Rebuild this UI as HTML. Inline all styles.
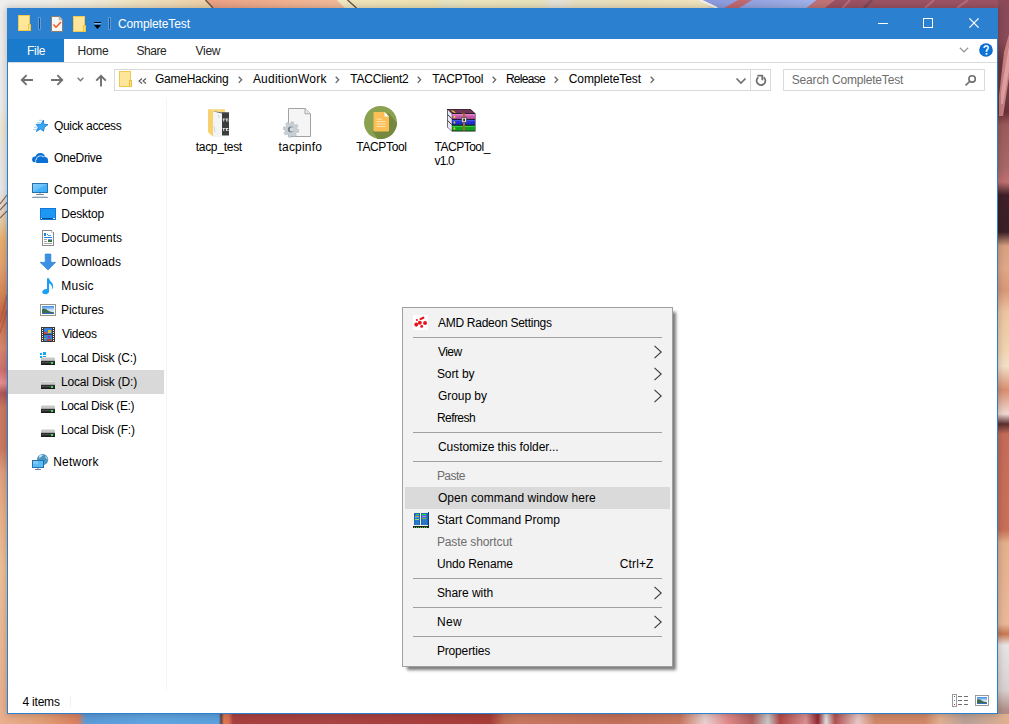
<!DOCTYPE html>
<html><head><meta charset="utf-8">
<style>
*{margin:0;padding:0;box-sizing:border-box}
html,body{width:1009px;height:724px;overflow:hidden}
body{position:relative;font-family:"Liberation Sans",sans-serif;font-size:12px;color:#000;background:#fff}
.a{position:absolute}
.t{position:absolute;white-space:pre;line-height:14px;height:14px;font-family:"Liberation Sans",sans-serif;font-size:12px}
svg{position:absolute;overflow:visible}
</style></head><body>

<!-- 00_bg.html -->
<svg style="left:0;top:0" width="1009" height="8" viewBox="0 0 1009 8">
<defs>
<linearGradient id="tg" x1="0" x2="1009" gradientUnits="userSpaceOnUse">
<stop offset="0" stop-color="#efefef"/><stop offset="0.045" stop-color="#f0eee8"/><stop offset="0.09" stop-color="#f0eada"/><stop offset="0.125" stop-color="#efe4c6"/><stop offset="0.2" stop-color="#ecd2aa"/>
<stop offset="0.34" stop-color="#f0e4bc"/><stop offset="0.43" stop-color="#eee2b4"/><stop offset="0.44" stop-color="#e6e2c4"/><stop offset="0.47" stop-color="#ece4bc"/><stop offset="0.535" stop-color="#e8e2bc"/><stop offset="0.55" stop-color="#e4e2dc"/><stop offset="0.57" stop-color="#e8e0c4"/><stop offset="0.64" stop-color="#ece0b8"/><stop offset="0.7" stop-color="#f0e4c0"/>
<stop offset="0.72" stop-color="#8a9ae0"/><stop offset="0.8" stop-color="#a0b0e8"/><stop offset="0.81" stop-color="#c07070"/><stop offset="0.84" stop-color="#a45a64"/><stop offset="1" stop-color="#9a5060"/>
</linearGradient>
<linearGradient id="pg" x1="206" x2="350" gradientUnits="userSpaceOnUse"><stop offset="0" stop-color="#eca084"/><stop offset="0.5" stop-color="#f0b090"/><stop offset="1" stop-color="#f2bc9c"/></linearGradient>
<linearGradient id="bg2" x1="700" x2="820" gradientUnits="userSpaceOnUse"><stop offset="0" stop-color="#8898dc"/><stop offset="1" stop-color="#a4b4ea"/></linearGradient>
</defs>
<rect x="0" y="0" width="1009" height="8" fill="url(#tg)"/>
<polygon points="206,0 337,0 345,8 213,8" fill="url(#pg)"/>
<polygon points="337,0 349,0 357,8 345,8" fill="#f2e8c4"/>
<path d="M205.5 0L213 8M347.5 0L356.5 8" stroke="#6e5040" stroke-width="1.4"/>
<polygon points="701,0 817,0 807,8 719,8" fill="url(#bg2)"/>
<path d="M700 0L717 8" stroke="#f6f2ec" stroke-width="2.2"/>
<polygon points="738,0 752,0 739,8 724,8" fill="#c06a72"/>
<polygon points="817,0 1009,0 1009,8 807,8" fill="#9c5262"/>
<polygon points="817,0 835,0 825,8 807,8" fill="#c07478"/>
<path d="M850 0L842.5 8M934 0L925 8M968 0L957 8" stroke="#b86c78" stroke-width="2.2"/>
<path d="M872 0L864 8" stroke="#7a4858" stroke-width="2.5"/>
</svg>
<div class="a" style="left:0;top:8px;width:7px;height:716px;background:linear-gradient(180deg,#eeeeee 0px,#ececea 100px,#ece6d4 120px,#e8e6e0 140px,#e8e8e8 180px,#e0d8cc 200px,#e6c8a0 215px,#e8b070 232px,#e4a070 260px,#d88858 285px,#c86848 305px,#d07858 320px,#d88870 340px,#d07070 362px,#e89090 375px,#b05858 385px,#cc7a60 400px,#cc7a60 440px,#e0a080 465px,#e8b088 500px,#ecc098 560px,#e8b090 716px)"></div>
<div class="a" style="left:998px;top:0;width:11px;height:724px;background:linear-gradient(180deg,#8a4a58 0px,#8a4a58 40px,#6a3840 62px,#6a3840 100px,#6a3038 112px,#9a5a5a 125px,#a86868 168px,#c07070 182px,#402028 195px,#3a2026 232px,#d8a080 246px,#e0a888 268px,#d89878 290px,#ecc4a0 312px,#f0d4b0 350px,#f2e0c8 366px,#d88e70 390px,#f0d8d0 414px,#5a3030 424px,#c46c58 434px,#c87058 530px,#e4b08c 543px,#e8b898 624px,#c87850 634px,#e8e4e4 645px,#d8d0d0 690px,#b09088 710px,#a88880 724px)"></div>
<div class="a" style="left:0;top:714px;width:1009px;height:10px;background:linear-gradient(90deg,#e8b090 0px,#e2a078 40px,#d88060 78px,#5a9ad8 86px,#60a4e0 150px,#5aa0dc 219px,#604040 221px,#e07850 224px,#d87050 229px,#a84040 233px,#a84444 330px,#a83c38 490px,#c07058 505px,#c87860 520px,#c07058 620px,#c87860 680px,#e8d0d0 705px,#e08888 728px,#b06060 752px,#c8c8c8 768px,#b04848 780px,#d89090 806px,#902830 818px,#e0e0e0 826px,#b05050 835px,#e8c8c8 858px,#d08868 875px,#d08868 925px,#e0b090 940px,#b8a098 965px,#e0b090 1009px)"></div>

<svg style="left:998px;top:0" width="11" height="130" viewBox="0 0 11 130"><polygon points="11,34 11,78 5,116 1,116 1,96 6,52" fill="#c88080"/><polygon points="11,46 11,70 5,104 3,104 3,92" fill="#e0a0a0"/></svg>
<svg style="left:0;top:190px" width="7" height="150" viewBox="0 0 7 150"><path d="M0 14L7 5M0 20L7 12.5M0 28L7 21" stroke="#8a6050" stroke-width="1.1" fill="none"/><path d="M0 133L7 105M0 143L7 120" stroke="#b05840" stroke-width="1.6" fill="none" opacity="0.7"/></svg>

<!-- 10_window.html -->
<div class="a" style="left:7px;top:8px;width:991px;height:706px;background:#fff;border:1px solid #2b7fd0;border-top:0;box-shadow:0 0 7px 1px rgba(0,0,0,0.2)"></div>
<div class="a" style="left:7px;top:8px;width:991px;height:31px;background:#2b80d0"></div>
<div class="a" style="left:7px;top:39px;width:57px;height:23px;background:#1a7acb"></div>
<div class="a" style="left:8px;top:62px;width:989px;height:1px;background:#dadbdc"></div>
<div class="a" style="left:114px;top:69px;width:657px;height:22px;border:1px solid #d9d9d9"></div>
<div class="a" style="left:750px;top:70px;width:1px;height:20px;background:#d9d9d9"></div>
<div class="a" style="left:783px;top:69px;width:202px;height:22px;border:1px solid #d9d9d9"></div>
<div class="a" style="left:166px;top:98px;width:1px;height:592px;background:#f5f5f5"></div>
<div class="a" style="left:8px;top:370px;width:156px;height:24px;background:#d9d9d9"></div>
<div class="a" style="left:70px;top:696px;width:1px;height:11px;background:#f0f0f0"></div>

<!-- 20_title.html -->
<svg style="left:18px;top:15px" width="13" height="16" viewBox="0 0 13 16" shape-rendering="crispEdges">
<rect x="0" y="0" width="12" height="16" fill="#f7c948"/><rect x="1" y="1" width="10" height="14" fill="#ffe699"/>
<rect x="10" y="9" width="3" height="7" fill="#f3c33c"/><rect x="11" y="10" width="1" height="5" fill="#ffe28a"/>
</svg>
<div class="a" style="left:38px;top:17px;width:3px;height:13px;background:#5d9ddd;border-radius:1px"></div>
<div class="a" style="left:39px;top:18px;width:1px;height:11px;background:#1e4e7e"></div>
<svg style="left:51px;top:16px" width="12" height="16" viewBox="0 0 12 16">
<path d="M0.5 0.5H8.3L11.5 3.7V15.5H0.5Z" fill="#f6f6f6" stroke="#8e7e70" stroke-width="1"/>
<path d="M8.3 0.5V3.7H11.5" fill="#dcdcdc" stroke="#a09080" stroke-width="0.8"/>
</svg>
<svg style="left:51px;top:16px" width="12" height="16" viewBox="0 0 12 16">
<polyline points="2.5,8.5 5,11.2 10,6" fill="none" stroke="#f05a1e" stroke-width="1.6"/>
</svg>
<svg style="left:73px;top:16px" width="13" height="16" viewBox="0 0 13 16" shape-rendering="crispEdges">
<rect x="0" y="0" width="12" height="16" fill="#f7c948"/><rect x="1" y="1" width="10" height="14" fill="#ffe699"/>
<rect x="10" y="9" width="3" height="7" fill="#f3c33c"/><rect x="11" y="10" width="1" height="5" fill="#ffe28a"/>
</svg>
<svg style="left:94px;top:22px" width="8" height="8" viewBox="0 0 8 8" shape-rendering="crispEdges">
<rect x="0" y="0" width="7" height="1" fill="#000"/><rect x="0" y="1" width="7" height="1" fill="#7ab8f0"/>
<path d="M0 3H7L3.5 7Z" fill="#000" shape-rendering="auto"/>
</svg>
<div class="a" style="left:108px;top:17px;width:3px;height:13px;background:#5d9ddd;border-radius:1px"></div>
<div class="a" style="left:109px;top:18px;width:1px;height:11px;background:#1e4e7e"></div>
<!-- window controls -->
<div class="a" style="left:878px;top:23px;width:10px;height:1px;background:#fff"></div>
<div class="a" style="left:923px;top:18px;width:10px;height:10px;border:1px solid #fff"></div>
<svg style="left:969px;top:18px" width="10" height="10" viewBox="0 0 10 10"><path d="M0.4 0.4L9.6 9.6M9.6 0.4L0.4 9.6" stroke="#fff" stroke-width="1.3"/></svg>
<!-- ribbon chevron & help -->
<svg style="left:959px;top:47px" width="10" height="7" viewBox="0 0 10 7"><polyline points="0.8,0.8 5,4.8 9.2,0.8" fill="none" stroke="#999" stroke-width="1.2"/></svg>
<svg style="left:979px;top:43px" width="14" height="14" viewBox="0 0 14 14"><circle cx="7" cy="7" r="6.8" fill="#0a62c0"/><circle cx="7" cy="7" r="5.9" fill="#0c74d8"/>
<path d="M5.2 4.9C5.2 3.5 6.1 2.8 7.2 2.8C8.4 2.8 9.2 3.6 9.2 4.7C9.2 6.2 7.5 6.5 7.5 8.3V8.9" fill="none" stroke="#e8f2fc" stroke-width="1.7"/>
<rect x="6.6" y="10" width="1.8" height="1.7" fill="#fff"/></svg>

<!-- 30_address.html -->
<svg style="left:20px;top:74px" width="14" height="12" viewBox="0 0 14 12"><path d="M13 6H1.8M6.6 1.2L1.8 6L6.6 10.8" fill="none" stroke="#707070" stroke-width="1.9"/></svg>
<svg style="left:50px;top:74px" width="14" height="12" viewBox="0 0 14 12"><path d="M1 6H12.2M7.4 1.2L12.2 6L7.4 10.8" fill="none" stroke="#707070" stroke-width="1.9"/></svg>
<svg style="left:77px;top:77px" width="7" height="5" viewBox="0 0 7 5"><polyline points="0.6,0.8 3.5,3.8 6.4,0.8" fill="none" stroke="#777" stroke-width="1.3"/></svg>
<svg style="left:95px;top:74px" width="12" height="13" viewBox="0 0 12 13"><path d="M6 12.5V1.8M1.2 6.6L6 1.8L10.8 6.6" fill="none" stroke="#707070" stroke-width="1.9"/></svg>
<svg style="left:119px;top:71px" width="13" height="16" viewBox="0 0 13 16" shape-rendering="crispEdges">
<rect x="0" y="0" width="12" height="16" fill="#f0c850"/><rect x="1" y="1" width="10" height="14" fill="#fde699"/>
<rect x="10" y="9" width="3" height="7" fill="#ecc040"/><rect x="11" y="10" width="1" height="5" fill="#fde08a"/>
</svg>
<svg style="left:138px;top:78px" width="9" height="6" viewBox="0 0 9 6"><path d="M4 0.5L1 3L4 5.5M8 0.5L5 3L8 5.5" fill="none" stroke="#555" stroke-width="1.1"/></svg>

<!-- 31_crumbs.html -->
<svg style="left:238px;top:76px" width="5" height="8" viewBox="0 0 5 8"><polyline points="0.7,0.7 3.7,3.8 0.7,6.9" fill="none" stroke="#666" stroke-width="1.3"/></svg>
<svg style="left:335px;top:76px" width="5" height="8" viewBox="0 0 5 8"><polyline points="0.7,0.7 3.7,3.8 0.7,6.9" fill="none" stroke="#666" stroke-width="1.3"/></svg>
<svg style="left:417px;top:76px" width="5" height="8" viewBox="0 0 5 8"><polyline points="0.7,0.7 3.7,3.8 0.7,6.9" fill="none" stroke="#666" stroke-width="1.3"/></svg>
<svg style="left:492px;top:76px" width="5" height="8" viewBox="0 0 5 8"><polyline points="0.7,0.7 3.7,3.8 0.7,6.9" fill="none" stroke="#666" stroke-width="1.3"/></svg>
<svg style="left:554px;top:76px" width="5" height="8" viewBox="0 0 5 8"><polyline points="0.7,0.7 3.7,3.8 0.7,6.9" fill="none" stroke="#666" stroke-width="1.3"/></svg>
<svg style="left:650px;top:76px" width="5" height="8" viewBox="0 0 5 8"><polyline points="0.7,0.7 3.7,3.8 0.7,6.9" fill="none" stroke="#666" stroke-width="1.3"/></svg>
<svg style="left:735px;top:77px" width="12" height="8" viewBox="0 0 12 8"><polyline points="1.5,1.5 6,6 10.5,1.5" fill="none" stroke="#707070" stroke-width="1.7"/></svg>
<svg style="left:754px;top:73px" width="14" height="14" viewBox="0 0 14 14"><path d="M9.6 4.2A4.4 4.4 0 1 1 4.4 4.2" fill="none" stroke="#707070" stroke-width="1.8"/><path d="M3.3 2.6H8.3V7.2" fill="none" stroke="#707070" stroke-width="1.8"/></svg>
<svg style="left:963px;top:73px" width="14" height="14" viewBox="0 0 14 14"><circle cx="9.1" cy="5.9" r="3.2" fill="none" stroke="#6e6e6e" stroke-width="1.6"/><path d="M6.9 8.2L2.6 12.4" stroke="#6e6e6e" stroke-width="1.6"/></svg>

<!-- 40_nav.html -->
<!-- quick access star -->
<svg style="left:30px;top:116px" width="20" height="20" viewBox="0 0 20 20">
<g stroke="#8cc8f4" stroke-width="0.9" stroke-linecap="round" opacity="0.9"><path d="M9.2 4.3H12M7.6 6.5H10.2M4.6 11.3H7M3.6 13.5H6.2"/></g>
<path d="M13.5 4.1L13.7 8.3L18 8.5L14.3 11.4L13.5 15.2L10.5 13L6.4 15.5L8.4 11.2L6.1 8.3L11 8.3Z" fill="#38a8f4" stroke="#1a80d8" stroke-width="0.9" stroke-linejoin="round"/>
</svg>
<!-- onedrive -->
<svg style="left:30px;top:148px" width="20" height="20" viewBox="0 0 20 20">
<defs><clipPath id="odb"><rect x="0" y="0" width="20" height="14.2"/></clipPath><clipPath id="odf"><rect x="0" y="0" width="20" height="15.1"/></clipPath></defs>
<g clip-path="url(#odb)" fill="#0b6fd6"><circle cx="10.3" cy="10.2" r="5.1"/><circle cx="5.2" cy="11.6" r="3.1"/></g>
<g clip-path="url(#odf)" fill="#0b6fd6" stroke="#fff" stroke-width="1.3"><circle cx="10.6" cy="12.4" r="4.2"/><circle cx="14.8" cy="12.2" r="3.1"/><circle cx="16" cy="13.2" r="2.1"/><rect x="6.2" y="12" width="11.8" height="4"/></g>
<g clip-path="url(#odf)" fill="#0b6fd6"><circle cx="10.6" cy="12.4" r="4.2"/><circle cx="14.8" cy="12.2" r="3.1"/><circle cx="16" cy="13.2" r="2.1"/><rect x="6.2" y="12" width="11.8" height="4"/></g>
</svg>
<!-- computer -->
<svg style="left:32px;top:183px" width="16" height="16" viewBox="0 0 16 16" shape-rendering="crispEdges">
<defs><linearGradient id="scr" x1="0" y1="0" x2="1" y2="1"><stop offset="0" stop-color="#86cdf8"/><stop offset="0.5" stop-color="#66c0fa"/><stop offset="0.52" stop-color="#48b4f8"/><stop offset="1" stop-color="#38acf8"/></linearGradient></defs>
<rect x="0" y="0" width="16" height="10" fill="#2a70a8"/><rect x="1" y="1" width="14" height="8" fill="url(#scr)"/>
<rect x="7" y="10" width="2" height="1" fill="#c0ccd8"/><rect x="4" y="11" width="8" height="1" fill="#7888a0"/>
<rect x="0" y="14" width="16" height="1" fill="#8c9cb0"/><rect x="1" y="13" width="14" height="1" fill="#d8e0e8"/>
</svg>
<!-- desktop -->
<svg style="left:40px;top:208px" width="16" height="12" viewBox="0 0 16 12" shape-rendering="crispEdges">
<rect x="0" y="0" width="16" height="12" fill="#1478d8"/><rect x="1" y="1" width="14" height="9" fill="#1e96f4"/>
<rect x="1" y="10" width="14" height="1" fill="#0c4a98"/>
<rect x="1" y="10" width="1" height="1" fill="#fff"/><rect x="13" y="10" width="1" height="1" fill="#e0f0ff"/><rect x="14" y="10" width="1" height="1" fill="#fff"/>
</svg>
<!-- documents -->
<svg style="left:42px;top:230px" width="12" height="16" viewBox="0 0 12 16" shape-rendering="crispEdges">
<path d="M0 0H9L12 3V16H0Z" fill="#8a8a8a"/><path d="M1 1H9V3H11V15H1Z" fill="#fff"/><rect x="9" y="1" width="2" height="2" fill="#d8d8d8"/>
<rect x="2" y="3" width="2" height="3" fill="#1e80d8"/><rect x="5" y="4" width="1" height="1" fill="#1e80d8"/><rect x="6" y="5" width="3" height="1" fill="#4aa0e8"/>
<rect x="2" y="7" width="8" height="1" fill="#1e80d8"/>
<rect x="2" y="9" width="3" height="1" fill="#a0a0a0"/><rect x="6" y="9" width="4" height="1" fill="#6aa0e8"/>
<rect x="2" y="11" width="3" height="1" fill="#a0a0a0"/><rect x="6" y="10" width="4" height="2" fill="#3a7a48"/>
<rect x="2" y="13" width="8" height="1" fill="#a8a8a8"/>
</svg>
<!-- downloads -->
<svg style="left:40px;top:254px" width="16" height="16" viewBox="0 0 16 16">
<path d="M5.2 0H10.9V8.3H15.7L8 16L0 8.3H5.2Z" fill="#3a90e2" stroke="#2a7ad4" stroke-width="0.6"/>
</svg>
<!-- music -->
<svg style="left:41px;top:278px" width="13" height="17" viewBox="0 0 13 17">
<path d="M6 0.2H8C8.3 1.8 9.6 3.4 10.9 4.8C12.3 6.3 12.6 8.7 11.4 11L10.8 10.6C11.4 8.8 10.8 7.3 9.5 6.2C9 5.8 8.5 5.5 8.1 5.2V13.3C8.1 15 6.5 16.2 4.3 16.2C2.3 16.2 1.1 15.4 1.3 14C1.5 12.3 3.4 11 5.6 11C6 11 6 11 6 11.1Z" fill="#18a0f2"/>
</svg>
<!-- pictures -->
<svg style="left:40px;top:304px" width="16" height="12" viewBox="0 0 16 12">
<defs><linearGradient id="pic" x1="0" y1="0" x2="0" y2="1"><stop offset="0" stop-color="#3a88ec"/><stop offset="0.5" stop-color="#d0e4f4"/><stop offset="1" stop-color="#e8f0f8"/></linearGradient></defs>
<g shape-rendering="crispEdges"><rect x="0" y="0" width="16" height="12" fill="#959595"/><rect x="1" y="1" width="14" height="10" fill="#fff"/><rect x="2" y="2" width="12" height="8" fill="url(#pic)"/></g>
<path d="M2 5.2C4 4.4 5.5 4.6 7.5 6.2C9.5 7.6 11.5 8 14 8.2V10H2Z" fill="#3c6c4c"/><rect x="2" y="9" width="12" height="1" fill="#3a6cc0"/>
</svg>
<!-- videos -->
<svg style="left:41px;top:327px" width="14" height="15" viewBox="0 0 14 15" shape-rendering="crispEdges">
<rect x="0" y="0" width="14" height="15" fill="#3a3a3a"/>
<rect x="1" y="1" width="1" height="1" fill="#fff"/><rect x="1" y="3" width="1" height="1" fill="#fff"/><rect x="1" y="5" width="1" height="1" fill="#fff"/><rect x="1" y="7" width="1" height="1" fill="#fff"/><rect x="1" y="9" width="1" height="1" fill="#fff"/><rect x="1" y="11" width="1" height="1" fill="#fff"/><rect x="1" y="13" width="1" height="1" fill="#fff"/>
<rect x="12" y="1" width="1" height="1" fill="#fff"/><rect x="12" y="3" width="1" height="1" fill="#fff"/><rect x="12" y="5" width="1" height="1" fill="#fff"/><rect x="12" y="7" width="1" height="1" fill="#fff"/><rect x="12" y="9" width="1" height="1" fill="#fff"/><rect x="12" y="11" width="1" height="1" fill="#fff"/><rect x="12" y="13" width="1" height="1" fill="#fff"/>
<rect x="3" y="1" width="8" height="6" fill="#3a80d8"/><rect x="3" y="8" width="8" height="6" fill="#3a80d8"/>
<rect x="7" y="3" width="3" height="3" fill="#e0c020"/><rect x="3" y="5" width="3" height="2" fill="#e04040"/><rect x="6" y="12" width="4" height="2" fill="#c04020"/><rect x="7" y="9" width="2" height="2" fill="#a030a0"/><rect x="3" y="11" width="2" height="1" fill="#80c040"/>
</svg>

<!-- 41_drives.html -->
<svg style="left:40px;top:352px" width="7" height="7" viewBox="0 0 7 7" shape-rendering="crispEdges"><g fill="#14aaf0"><rect x="0" y="1" width="2" height="2"/><rect x="3" y="0" width="3" height="3"/><rect x="0" y="4" width="2" height="2"/><rect x="3" y="4" width="3" height="3"/></g></svg>
<svg style="left:41px;top:357px" width="14" height="8" viewBox="0 0 14 8" shape-rendering="crispEdges">
<rect x="1" y="0" width="12" height="1" fill="#e4e4e4"/><rect x="0" y="1" width="14" height="3" fill="#c8c8c8"/><rect x="0" y="3" width="14" height="1" fill="#a8a8a8"/>
<rect x="0" y="4" width="14" height="4" fill="#2e2e2e"/><rect x="1" y="5" width="9" height="1" fill="#484848"/><rect x="10" y="5" width="2" height="2" fill="#40e040"/><rect x="0" y="7" width="14" height="1" fill="#1a1a1a"/>
</svg>
<svg style="left:41px;top:381px" width="14" height="8" viewBox="0 0 14 8" shape-rendering="crispEdges">
<rect x="1" y="0" width="12" height="1" fill="#e4e4e4"/><rect x="0" y="1" width="14" height="3" fill="#c8c8c8"/><rect x="0" y="3" width="14" height="1" fill="#a8a8a8"/>
<rect x="0" y="4" width="14" height="4" fill="#2e2e2e"/><rect x="1" y="5" width="9" height="1" fill="#484848"/><rect x="10" y="5" width="2" height="2" fill="#40e040"/><rect x="0" y="7" width="14" height="1" fill="#1a1a1a"/>
</svg>
<svg style="left:41px;top:405px" width="14" height="8" viewBox="0 0 14 8" shape-rendering="crispEdges">
<rect x="1" y="0" width="12" height="1" fill="#e4e4e4"/><rect x="0" y="1" width="14" height="3" fill="#c8c8c8"/><rect x="0" y="3" width="14" height="1" fill="#a8a8a8"/>
<rect x="0" y="4" width="14" height="4" fill="#2e2e2e"/><rect x="1" y="5" width="9" height="1" fill="#484848"/><rect x="10" y="5" width="2" height="2" fill="#40e040"/><rect x="0" y="7" width="14" height="1" fill="#1a1a1a"/>
</svg>
<svg style="left:41px;top:429px" width="14" height="8" viewBox="0 0 14 8" shape-rendering="crispEdges">
<rect x="1" y="0" width="12" height="1" fill="#e4e4e4"/><rect x="0" y="1" width="14" height="3" fill="#c8c8c8"/><rect x="0" y="3" width="14" height="1" fill="#a8a8a8"/>
<rect x="0" y="4" width="14" height="4" fill="#2e2e2e"/><rect x="1" y="5" width="9" height="1" fill="#484848"/><rect x="10" y="5" width="2" height="2" fill="#40e040"/><rect x="0" y="7" width="14" height="1" fill="#1a1a1a"/>
</svg>
<svg style="left:28px;top:450px" width="24" height="24" viewBox="0 0 24 24">
<circle cx="14.6" cy="9.6" r="5.6" fill="#4a94c0"/><path d="M11 6C12 5 14 4.5 15 5.2C14 6.5 12.5 7 11.5 8.5Z M17 6C18.5 6.5 19.5 8 19.8 9.5C18.5 9 17.5 8 17 6Z" fill="#c8e4f4"/>
<g shape-rendering="crispEdges"><rect x="4" y="10" width="12" height="8" fill="#2a70a8"/><rect x="5" y="11" width="10" height="6" fill="#58bcf8"/><rect x="5" y="11" width="5" height="3" fill="#7cc8f8"/>
<rect x="9" y="18" width="2" height="1" fill="#b8c8d8"/><rect x="7" y="19" width="6" height="1" fill="#7080a0"/></g>
</svg>

<!-- 50_files.html -->
<!-- tacp_test folder -->
<svg style="left:203px;top:105px" width="32" height="36" viewBox="0 0 32 36">
<path d="M5 4.2H22V12L5 12Z" fill="#f8d878"/>
<path d="M8.5 6.2L19.5 7.2V32H11L8.5 30Z" fill="#f4f4f4"/>
<path d="M19 7.5H26V30.5H19Z" fill="#3c3c3c"/>
<path d="M8.8 6L19 7.5H26V8.5H19Z" fill="#4a4a4a"/>
<path d="M19.6 13.4h2.2v1h-2.2zM22.4 13.4h3v1h-3zM20.2 14.4h1v2h-1zM23.2 14.4h1v2h-1zM24.6 15.4h1v1h-1zM19.6 22.9h2.2v1h-2.2zM22.4 22.9h3v1h-3zM20.2 23.9h1v2.2h-1zM23 23.9h1.2v2h-1.2zM24.6 25h1v1h-1z" fill="#e0e0e0"/>
<path d="M5 4.5L10 6.5V32L5 27Z" fill="#f6d16e"/>
<path d="M15 10L16.5 13M11 21L12 27" stroke="#c8d8e8" stroke-width="1"/>
</svg>
<!-- tacpinfo doc with gear -->
<svg style="left:279px;top:105px" width="36" height="36" viewBox="0 0 36 36">
<path d="M9.5 3.5H26.2L31.5 8.8V31.5H9.5Z" fill="#f5f5f5" stroke="#a2a2a2" stroke-width="1"/>
<path d="M26 3.5V8.8H31.5" fill="#e8e8e8" stroke="#a8a8a8" stroke-width="1"/>
<path d="M11.57 18.72 L11.59 18.71 L12.24 16.70 L14.86 17.23 L14.67 19.34 L15.86 20.14 L15.87 20.15 L17.75 19.18 L19.23 21.41 L17.61 22.77 L17.88 24.17 L17.89 24.19 L19.90 24.84 L19.37 27.46 L17.26 27.27 L16.46 28.46 L16.45 28.47 L17.42 30.35 L15.19 31.83 L13.83 30.21 L12.43 30.48 L12.41 30.49 L11.76 32.50 L9.14 31.97 L9.33 29.86 L8.14 29.06 L8.13 29.05 L6.25 30.02 L4.77 27.79 L6.39 26.43 L6.12 25.03 L6.11 25.01 L4.10 24.36 L4.63 21.74 L6.74 21.93 L7.54 20.74 L7.55 20.73 L6.58 18.85 L8.81 17.37 L10.17 18.99Z" fill="#c6ced6" stroke="#aab2ba" stroke-width="0.5"/><circle cx="11.8" cy="24.4" r="2.9" fill="#767b82"/><circle cx="12.9" cy="24.4" r="2.2" fill="#d5dae0"/>
</svg>
<!-- TACPTool green circle -->
<svg style="left:363px;top:105px" width="35" height="35" viewBox="0 0 35 35">
<defs><clipPath id="cc"><circle cx="17.5" cy="17.5" r="16.5"/></clipPath></defs>
<circle cx="17.5" cy="17.5" r="16.5" fill="#8aa150"/>
<path d="M10 26.5L25.5 8L40 25L30 40L18 40Z" fill="#74883f" clip-path="url(#cc)"/>
<path d="M11.5 7H21.5L26 11.5V25.5Q26 26.5 25 26.5H11.5Q10.5 26.5 10.5 25.5V8Q10.5 7 11.5 7Z" fill="#fbbf55"/>
<path d="M21.5 7V11.5H26Z" fill="#fff"/>
<path d="M13.5 14.2H19M13.5 16.6H22.5M13.5 19H22.5M13.5 21.4H22.5" stroke="#fde6b8" stroke-width="1"/>
</svg>
<!-- WinRAR -->
<svg style="left:443px;top:105px" width="36" height="30" viewBox="0 0 36 30">
<path d="M4 4H27.5L32.5 8.5V26.5H9L4 22Z" fill="#1a1a1a"/>
<path d="M4.6 4.6L8.8 8.8V26L4.6 22Z" fill="#e8e8f8"/>
<path d="M4.6 9.5L8.8 13.6M4.6 15.5L8.8 19.6" stroke="#333" stroke-width="1"/>
<path d="M5 4.5H27.2L31.5 8.3H9.2Z" fill="#6e3458"/>
<path d="M9.2 9H32V13.8H9.2Z" fill="#c455a8"/><path d="M9.2 9.3H32V10.4H9.2Z" fill="#f090e0"/>
<path d="M9.2 14.8H32V19.6H9.2Z" fill="#1e2ed0"/><path d="M9.2 15.2H32V16.2H9.2Z" fill="#4a60f0"/>
<path d="M9.2 20.6H32V25.6H9.2Z" fill="#12a020"/><path d="M9.2 21H32V22H9.2Z" fill="#30d040"/>
<path d="M16 4.5L19.5 8.3H22V25.6H20V9.5Z" fill="#a86a1e"/>
<rect x="18.8" y="12.5" width="4.6" height="4.8" fill="#e8e8e8" stroke="#444" stroke-width="0.7"/>
<rect x="20.2" y="13.6" width="1.8" height="2.6" fill="#333"/>
<path d="M10.6 11h1.6v2h-1.6zM10.6 16.6h1.6v2h-1.6zM10.6 22.4h1.6v2h-1.6zM8 5.5l3 2.2h2l-3-2.2z" fill="#e8d820"/>
</svg>

<!-- 60_status.html -->
<svg style="left:952px;top:694px" width="17" height="13" viewBox="0 0 17 13" shape-rendering="crispEdges">
<rect x="0" y="0" width="5" height="13" fill="#9a9a9a"/><rect x="1" y="1" width="3" height="11" fill="#fff"/>
<rect x="2" y="2" width="1" height="1" fill="#3a7a5a"/><rect x="2" y="6" width="1" height="1" fill="#3a8af0"/><rect x="2" y="10" width="1" height="1" fill="#e02020"/>
<rect x="6" y="2" width="4" height="1" fill="#707070"/><rect x="12" y="2" width="4" height="1" fill="#707070"/>
<rect x="6" y="6" width="4" height="1" fill="#707070"/><rect x="12" y="6" width="4" height="1" fill="#707070"/>
<rect x="6" y="10" width="4" height="1" fill="#707070"/><rect x="12" y="10" width="4" height="1" fill="#707070"/>
</svg>
<svg style="left:975px;top:695px" width="14" height="11" viewBox="0 0 14 11">
<defs><linearGradient id="pic2" x1="0" y1="0" x2="0" y2="1"><stop offset="0" stop-color="#3a88ec"/><stop offset="0.5" stop-color="#d0e4f4"/><stop offset="1" stop-color="#e8f0f8"/></linearGradient></defs>
<g shape-rendering="crispEdges"><rect x="0" y="0" width="14" height="11" fill="#9a9a9a"/><rect x="1" y="1" width="12" height="9" fill="#fff"/><rect x="2" y="2" width="10" height="7" fill="url(#pic2)"/></g>
<path d="M2 4.6C3.6 4 5 4.2 6.6 5.6C8.2 6.8 10 7.2 12 7.3V9H2Z" fill="#3c6c4c"/><rect x="2" y="8" width="10" height="1" fill="#3a6cc0"/>
</svg>

<!-- 90_menu.html -->
<div class="a" style="left:402px;top:307px;width:271px;height:360px;background:#f2f2f2;border:1px solid #a0a0a0;box-shadow:4px 4px 3px -1px rgba(0,0,0,0.52)"></div>
<div class="a" style="left:405px;top:487px;width:265px;height:22px;background:#dadada"></div>
<div class="a" style="left:413px;top:337px;width:249px;height:1px;background:#a0a0a0"></div>
<div class="a" style="left:413px;top:432px;width:249px;height:1px;background:#a0a0a0"></div>
<div class="a" style="left:413px;top:461px;width:249px;height:1px;background:#a0a0a0"></div>
<div class="a" style="left:413px;top:578px;width:249px;height:1px;background:#a0a0a0"></div>
<div class="a" style="left:413px;top:607px;width:249px;height:1px;background:#a0a0a0"></div>
<div class="a" style="left:413px;top:636px;width:249px;height:1px;background:#a0a0a0"></div>

<!-- 91_menuicons.html -->
<svg style="left:653px;top:345px" width="10" height="14" viewBox="0 0 10 14"><polyline points="1.5,0.8 8.2,7 1.5,13.2" fill="none" stroke="#3a3a3a" stroke-width="1.1"/></svg>
<svg style="left:653px;top:367px" width="10" height="14" viewBox="0 0 10 14"><polyline points="1.5,0.8 8.2,7 1.5,13.2" fill="none" stroke="#3a3a3a" stroke-width="1.1"/></svg>
<svg style="left:653px;top:389px" width="10" height="14" viewBox="0 0 10 14"><polyline points="1.5,0.8 8.2,7 1.5,13.2" fill="none" stroke="#3a3a3a" stroke-width="1.1"/></svg>
<svg style="left:653px;top:586px" width="10" height="14" viewBox="0 0 10 14"><polyline points="1.5,0.8 8.2,7 1.5,13.2" fill="none" stroke="#3a3a3a" stroke-width="1.1"/></svg>
<svg style="left:653px;top:615px" width="10" height="14" viewBox="0 0 10 14"><polyline points="1.5,0.8 8.2,7 1.5,13.2" fill="none" stroke="#3a3a3a" stroke-width="1.1"/></svg>
<div class="a" style="left:413px;top:315px;width:15px;height:15px;background:#fff"></div>
<svg style="left:413px;top:315px" width="15" height="15" viewBox="0 0 15 15">
<g fill="#e8141c"><circle cx="6.85" cy="7.75" r="1.95"/><circle cx="12.05" cy="7.9" r="2"/><ellipse cx="3.3" cy="9.6" rx="2" ry="2.1"/><circle cx="8.7" cy="11.4" r="1.45"/><circle cx="3.9" cy="5.05" r="1.05"/><path d="M7.6 4L10.4 2.7" stroke="#e8141c" stroke-width="2.1" stroke-linecap="round"/></g></svg>
<svg style="left:413px;top:512px" width="17" height="17" viewBox="0 0 17 17" shape-rendering="crispEdges">
<rect x="1" y="0" width="15" height="14" fill="#f4efe0"/>
<rect x="1" y="1" width="6" height="12" fill="#1e64b4"/><rect x="8" y="1" width="7" height="12" fill="#1e64b4"/>
<rect x="2" y="2" width="4" height="11" fill="#2878c8"/><rect x="9" y="2" width="5" height="11" fill="#2878c8"/>
<rect x="15" y="0" width="1" height="14" fill="#103c78"/>
<rect x="3" y="2" width="3" height="1" fill="#30e040"/><rect x="2" y="4" width="4" height="1" fill="#f09030"/><rect x="2" y="5" width="4" height="1" fill="#30a0f0"/><rect x="2" y="7" width="4" height="1" fill="#a0e050"/>
<rect x="9" y="2" width="4" height="1" fill="#30e040"/><rect x="9" y="4" width="4" height="1" fill="#c070f0"/><rect x="9" y="6" width="4" height="1" fill="#80b040"/>
<rect x="0" y="14" width="16" height="2" fill="#202020"/><rect x="1" y="15" width="1" height="1" fill="#50d040"/><rect x="3" y="15" width="1" height="1" fill="#50d040"/><rect x="5" y="15" width="1" height="1" fill="#50d040"/><rect x="7" y="15" width="1" height="1" fill="#50d040"/><rect x="9" y="15" width="1" height="1" fill="#50d040"/><rect x="11" y="15" width="1" height="1" fill="#50d040"/><rect x="13" y="15" width="1" height="1" fill="#50d040"/>
</svg>

<!-- texts -->
<div class="t" style="left:118.0px;top:17px;letter-spacing:-0.127px;color:#fff">CompleteTest</div>
<div class="t" style="left:26.9px;top:44px;letter-spacing:-0.233px;color:#fff">File</div>
<div class="t" style="left:77.6px;top:44px;letter-spacing:-0.333px;color:#262626">Home</div>
<div class="t" style="left:136.6px;top:44px;letter-spacing:-0.5px;color:#262626">Share</div>
<div class="t" style="left:195.6px;top:44px;letter-spacing:-0.333px;color:#262626">View</div>
<div class="t" style="left:154.9px;top:72px;letter-spacing:-0.23px;color:#000">GameHacking</div>
<div class="t" style="left:252.9px;top:72px;letter-spacing:0.218px;color:#000">AuditionWork</div>
<div class="t" style="left:350.3px;top:72px;letter-spacing:-0.222px;color:#000">TACClient2</div>
<div class="t" style="left:432.3px;top:72px;letter-spacing:-0.3px;color:#000">TACPTool</div>
<div class="t" style="left:505.9px;top:72px;letter-spacing:-0.7px;color:#000">Release</div>
<div class="t" style="left:568.8px;top:72px;letter-spacing:-0.109px;color:#000">CompleteTest</div>
<div class="t" style="left:791.8px;top:73px;letter-spacing:-0.178px;color:#6d6d6d">Search CompleteTest</div>
<div class="t" style="left:54.0px;top:119px;letter-spacing:-0.327px;color:#000">Quick access</div>
<div class="t" style="left:54.1px;top:151px;letter-spacing:-0.386px;color:#000">OneDrive</div>
<div class="t" style="left:54.1px;top:183px;letter-spacing:0.071px;color:#000">Computer</div>
<div class="t" style="left:61.2px;top:207px;letter-spacing:-0.183px;color:#000">Desktop</div>
<div class="t" style="left:61.2px;top:231px;letter-spacing:0.013px;color:#000">Documents</div>
<div class="t" style="left:61.2px;top:255px;letter-spacing:0.05px;color:#000">Downloads</div>
<div class="t" style="left:61.2px;top:279px;letter-spacing:0.275px;color:#000">Music</div>
<div class="t" style="left:61.0px;top:303px;letter-spacing:-0.086px;color:#000">Pictures</div>
<div class="t" style="left:62.0px;top:327px;letter-spacing:-0.3px;color:#000">Videos</div>
<div class="t" style="left:60.9px;top:351px;letter-spacing:-0.2px;color:#000">Local Disk (C:)</div>
<div class="t" style="left:60.9px;top:375px;letter-spacing:-0.171px;color:#000">Local Disk (D:)</div>
<div class="t" style="left:60.9px;top:399px;letter-spacing:-0.307px;color:#000">Local Disk (E:)</div>
<div class="t" style="left:60.9px;top:423px;letter-spacing:-0.236px;color:#000">Local Disk (F:)</div>
<div class="t" style="left:53.2px;top:455px;letter-spacing:0.233px;color:#000">Network</div>
<div class="t" style="left:195.7px;top:140px;letter-spacing:-0.275px;color:#000">tacp_test</div>
<div class="t" style="left:278.5px;top:140px;letter-spacing:0.2px;color:#000">tacpinfo</div>
<div class="t" style="left:356.3px;top:140px;letter-spacing:-0.357px;color:#000">TACPTool</div>
<div class="t" style="left:434.5px;top:140px;letter-spacing:-0.487px;color:#000">TACPTool_</div>
<div class="t" style="left:434.6px;top:154px;letter-spacing:-0.9px;color:#000">v1.0</div>
<div class="t" style="left:22.5px;top:695px;letter-spacing:-0.217px;color:#000">4 items</div>
<div class="t" style="left:437.9px;top:316px;letter-spacing:-0.256px;color:#000">AMD Radeon Settings</div>
<div class="t" style="left:437.9px;top:345px;letter-spacing:-0.5px;color:#000">View</div>
<div class="t" style="left:436.9px;top:367px;letter-spacing:-0.067px;color:#000">Sort by</div>
<div class="t" style="left:437.9px;top:389px;letter-spacing:-0.043px;color:#000">Group by</div>
<div class="t" style="left:436.9px;top:411px;letter-spacing:-0.55px;color:#000">Refresh</div>
<div class="t" style="left:437.9px;top:440px;letter-spacing:-0.03px;color:#000">Customize this folder...</div>
<div class="t" style="left:436.9px;top:469px;letter-spacing:-0.55px;color:#6d6d6d">Paste</div>
<div class="t" style="left:437.9px;top:491px;letter-spacing:0.074px;color:#000">Open command window here</div>
<div class="t" style="left:436.9px;top:513px;letter-spacing:0.017px;color:#000">Start Command Promp</div>
<div class="t" style="left:436.9px;top:535px;letter-spacing:-0.1px;color:#6d6d6d">Paste shortcut</div>
<div class="t" style="left:436.9px;top:557px;letter-spacing:-0.13px;color:#000">Undo Rename</div>
<div class="t" style="left:619.8px;top:557px;letter-spacing:0.12px;color:#000">Ctrl+Z</div>
<div class="t" style="left:436.9px;top:586px;letter-spacing:-0.044px;color:#000">Share with</div>
<div class="t" style="left:436.9px;top:615px;letter-spacing:0.4px;color:#000">New</div>
<div class="t" style="left:436.9px;top:644px;letter-spacing:-0.156px;color:#000">Properties</div>
</body></html>
